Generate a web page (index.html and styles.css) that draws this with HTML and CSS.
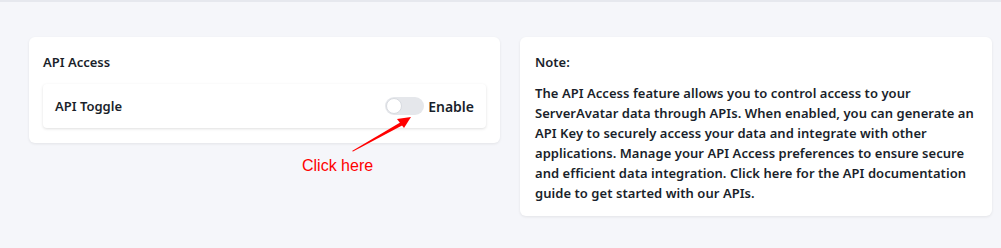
FILE: index.html
```html
<!DOCTYPE html>
<html lang="en">
<head>
<meta charset="utf-8">
<title>API Access</title>
<link rel="stylesheet" href="styles.css">
</head>
<body>
<div class="page">
  <div class="grid">
    <section class="card card-left">
      <h2 class="title">API Access</h2>
      <div class="row">
        <span class="row-label">API Toggle</span>
        <label class="switch-wrap">
          <span class="switch"><span class="knob"></span></span>
          <span class="switch-text">Enable</span>
        </label>
      </div>
    </section>
    <section class="card card-right">
      <h2 class="title">Note:</h2>
      <p class="note">The API Access feature allows you to control access to your<br>ServerAvatar data through APIs. When enabled, you can generate an<br>API Key to securely access your data and integrate with other<br>applications. Manage your API Access preferences to ensure secure<br>and efficient data integration. Click here for the API documentation<br>guide to get started with our APIs.</p>
    </section>
  </div>
  <svg class="arrow" width="1001" height="248" viewBox="0 0 1001 248" aria-hidden="true">
    <polygon points="352,151 401,122 403,125 353,151.6" fill="#ff0000"/>
    <polygon points="411,117 397,119 404,128" fill="#ff0000"/>
  </svg>
  <span class="annot">Click here</span>
</div>
</body>
</html>
```
FILE: styles.css
```css
* { box-sizing: border-box; }
html, body { margin: 0; padding: 0; }
body {
  background: #f5f6fa;
  font-family: "Noto Sans", "Open Sans", sans-serif;
  color: #1a1f2b;
  width: 1001px;
  height: 248px;
  overflow: hidden;
}
.page {
  position: relative;
  border-top: 2px solid #e6e8ee;
  height: 248px;
  padding: 35px 9px 0 29px;
}
.grid {
  display: grid;
  grid-template-columns: 471px 472px;
  column-gap: 20px;
  align-items: start;
}
.card {
  background: #fff;
  border-radius: 6px;
  box-shadow: 0 1px 3px rgba(0, 0, 0, 0.08);
}
.card-left { padding: 16px 14px 15px 14px; }
.card-right { padding: 16px 10px 13px 15px; }
.title {
  margin: 0;
  font-size: 13px;
  line-height: 18px;
  font-weight: 600;
}
.row {
  margin-top: 13px;
  height: 44px;
  display: flex;
  align-items: center;
  justify-content: space-between;
  padding: 0 12px;
  border-radius: 4px;
  box-shadow: 0 1px 3px rgba(0, 0, 0, 0.13);
}
.row-label {
  font-size: 13px;
  font-weight: 600;
}
.switch-wrap {
  display: flex;
  align-items: center;
  gap: 4px;
}
.switch {
  width: 39px;
  height: 18px;
  border-radius: 9px;
  background: #e5e7eb;
  display: flex;
  align-items: center;
  padding-left: 1px;
}
.knob {
  width: 16px;
  height: 16px;
  border-radius: 50%;
  background: #fff;
  border: 1px solid #d8dbe0;
}
.switch-text {
  font-size: 14px;
  font-weight: 600;
}
.note {
  margin: 12px 0 0 0;
  font-size: 13px;
  letter-spacing: 0.05px;
  line-height: 20px;
  font-weight: 600;
}
.arrow {
  position: absolute;
  left: 0;
  top: -2px;
  pointer-events: none;
}
.annot {
  position: absolute;
  left: 302px;
  top: 154px;
  font-family: "Liberation Sans", Arial, sans-serif;
  font-size: 16px;
  line-height: 20px;
  color: #ff0000;
}
```
